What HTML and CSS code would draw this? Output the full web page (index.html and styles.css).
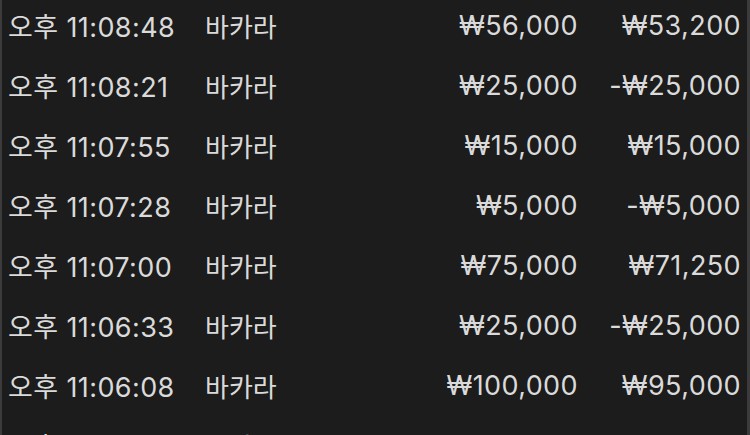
FILE: index.html
```html
<!DOCTYPE html>
<html lang="ko">
<head>
    <meta charset="UTF-8">
    <meta name="viewport" content="width=device-width, initial-scale=1.0">
    <title>베팅 내역</title>
    <link rel="stylesheet" href="styles.css">
</head>
<body>
    <div class="history">
        <div class="rows">
            <div class="row"><span class="time">오후 11:08:48</span><span class="game">바카라</span><span class="bet">₩56,000</span><span class="result">₩53,200</span></div>
            <div class="row"><span class="time">오후 11:08:21</span><span class="game">바카라</span><span class="bet">₩25,000</span><span class="result">-₩25,000</span></div>
            <div class="row"><span class="time">오후 11:07:55</span><span class="game">바카라</span><span class="bet">₩15,000</span><span class="result">₩15,000</span></div>
            <div class="row"><span class="time">오후 11:07:28</span><span class="game">바카라</span><span class="bet">₩5,000</span><span class="result">-₩5,000</span></div>
            <div class="row"><span class="time">오후 11:07:00</span><span class="game">바카라</span><span class="bet">₩75,000</span><span class="result">₩71,250</span></div>
            <div class="row"><span class="time">오후 11:06:33</span><span class="game">바카라</span><span class="bet">₩25,000</span><span class="result">-₩25,000</span></div>
            <div class="row"><span class="time">오후 11:06:08</span><span class="game">바카라</span><span class="bet">₩100,000</span><span class="result">₩95,000</span></div>
            <div class="row"><span class="time">오후 11:05:41</span><span class="game">바카라</span><span class="bet">₩50,000</span><span class="result">₩47,500</span></div>
        </div>
    </div>
</body>
</html>
```

FILE: styles.css
```css
*,
html{
    box-sizing: border-box;
    padding: 0;
    margin: 0;
}
body{
    width: 750px;
    height: 435px;
    overflow: hidden;
    background-color: #1c1c1c;
    color: #dadada;
    font-family: Inter, "Noto Sans CJK KR", sans-serif;
    font-size: 27px;
    letter-spacing: 0.4px;
}
.history{
    height: 100%;
    border-left: 2px solid #3b3b3b;
    border-right: 3px solid #3b3b3b;
    padding: 0 6px;
    overflow: hidden;
}
.rows{
    margin-top: -5px;
}
.row{
    display: grid;
    grid-template-columns: 197px 1fr 150px 163px;
    align-items: center;
    height: 60px;
    white-space: nowrap;
}
.game{
    font-size: 26px;
    letter-spacing: 0;
}
.bet,
.result{
    text-align: right;
}
```
